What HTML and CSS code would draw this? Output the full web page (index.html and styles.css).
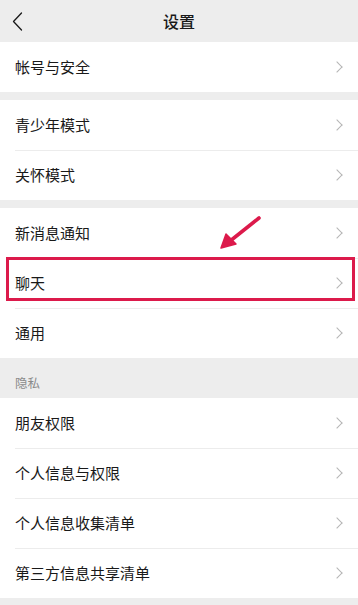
FILE: index.html
```html
<!DOCTYPE html>
<html lang="zh-CN">
<head>
<meta charset="utf-8">
<title>设置</title>
<link rel="stylesheet" href="styles.css">
</head>
<body>
<div class="page">
  <header class="topbar">
    <span class="back">
      <svg width="11" height="19" viewBox="0 0 11 19"><path d="M9.5 1 L1.5 9.5 L9.5 18" fill="none" stroke="#191919" stroke-width="1.3" stroke-linecap="round" stroke-linejoin="round"/></svg>
    </span>
    <h1 class="title">设置</h1>
    <span></span>
  </header>

  <section class="group">
    <div class="row"><span class="label">帐号与安全</span><span class="chev"></span></div>
  </section>

  <section class="group spaced">
    <div class="row"><span class="label">青少年模式</span><span class="chev"></span></div>
    <div class="row"><span class="label">关怀模式</span><span class="chev"></span></div>
  </section>

  <section class="group spaced">
    <div class="row"><span class="label">新消息通知</span><span class="chev"></span></div>
    <div class="row highlighted"><span class="label">聊天</span><span class="chev"></span><span class="mark"></span></div>
    <div class="row"><span class="label">通用</span><span class="chev"></span></div>
  </section>

  <div class="section-title">隐私</div>

  <section class="group">
    <div class="row"><span class="label">朋友权限</span><span class="chev"></span></div>
    <div class="row"><span class="label">个人信息与权限</span><span class="chev"></span></div>
    <div class="row"><span class="label">个人信息收集清单</span><span class="chev"></span></div>
    <div class="row"><span class="label">第三方信息共享清单</span><span class="chev"></span></div>
  </section>

  <svg class="arrow" width="50" height="45" viewBox="0 0 50 45">
    <line x1="44" y1="8" x2="17" y2="29.5" stroke="#dc1a4b" stroke-width="3.6" stroke-linecap="round"/>
    <polygon points="6,38 11,24 21,34" fill="#dc1a4b" stroke="#dc1a4b" stroke-width="1.5" stroke-linejoin="round"/>
  </svg>
</div>
</body>
</html>
```

FILE: styles.css
```css
html, body {
  margin: 0;
  padding: 0;
  background: #ededed;
}

body {
  font-family: "Noto Sans CJK SC", "Noto Sans", sans-serif;
  color: #191919;
  width: 358px;
  height: 605px;
  overflow: hidden;
}

.page {
  position: relative;
  min-height: 605px;
}

.topbar {
  height: 42px;
  display: grid;
  grid-template-columns: 40px 1fr 40px;
  align-items: center;
  background: #ededed;
}

.back {
  display: flex;
  align-items: center;
  padding-left: 12px;
  height: 42px;
}

.title {
  margin: 0;
  text-align: center;
  font-size: 16px;
  font-weight: 500;
  line-height: 42px;
}

.group {
  background: #ffffff;
}

.spaced {
  margin-top: 8px;
}

.row {
  position: relative;
  height: 50px;
  display: flex;
  align-items: center;
  justify-content: space-between;
  padding: 0 15px;
}

.row + .row::before {
  content: "";
  position: absolute;
  top: 0;
  left: 15px;
  right: 0;
  height: 1px;
  background: #ececec;
}

.label {
  font-size: 15px;
  line-height: 20px;
}

.chev {
  width: 7px;
  height: 7px;
  border-top: 1.3px solid #b5b5b5;
  border-right: 1.3px solid #b5b5b5;
  transform: rotate(45deg);
  margin-right: 2px;
}

.mark {
  position: absolute;
  left: 6px;
  right: 3px;
  top: -1px;
  height: 44px;
  border: 3.5px solid #dc1a4b;
  box-sizing: border-box;
}

.section-title {
  height: 40px;
  display: flex;
  align-items: flex-end;
  padding: 0 15px 6px;
  box-sizing: border-box;
  font-size: 12.5px;
  line-height: 18px;
  color: #8a8a8a;
}

.arrow {
  position: absolute;
  left: 215px;
  top: 210px;
}
```
